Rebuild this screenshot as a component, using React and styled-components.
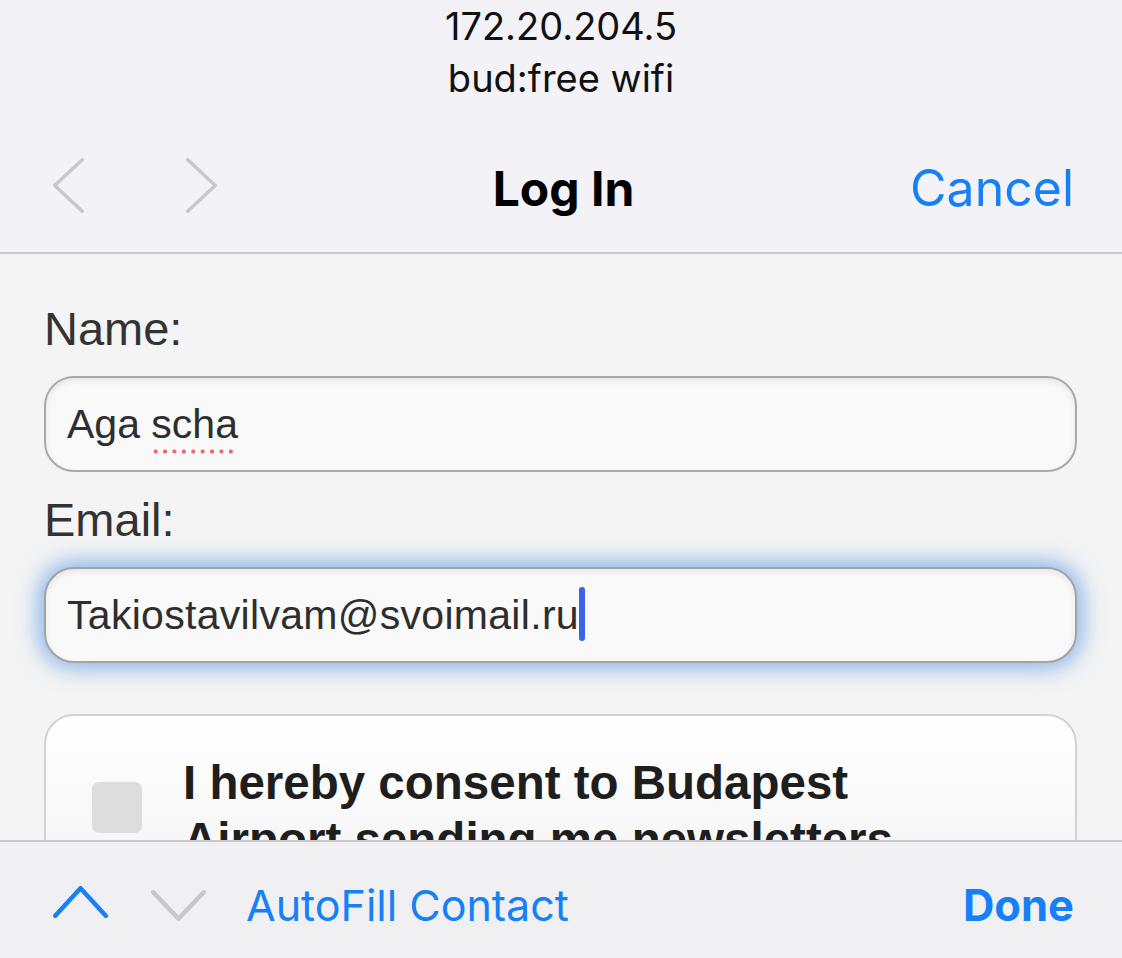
import React from "react";
import styled, { createGlobalStyle } from "styled-components";

const Global = createGlobalStyle`
  html, body { margin: 0; padding: 0; }
  body { background: #f4f4f4; }
  * { box-sizing: border-box; }
`;

const BLUE = "#1580f8";
const SF = `Inter, "Noto Sans", "Liberation Sans", sans-serif`;
const WEB = `"Liberation Sans", Arial, sans-serif`;

const Screen = styled.div`
  width: 1122px;
  height: 958px;
  display: flex;
  flex-direction: column;
  overflow: hidden;
  background: #f4f4f4;
`;

const Header = styled.header`
  flex: none;
  height: 254px;
  background: #f2f2f7;
  border-bottom: 2px solid #c9c9cd;
  display: flex;
  flex-direction: column;
`;

const InfoLine = styled.div`
  height: 52px;
  line-height: 52px;
  text-align: center;
  font-family: ${SF};
  font-size: 38px;
  color: #111;
`;

const NavBar = styled.div`
  flex: 1;
  display: grid;
  grid-template-columns: 1fr auto 1fr;
  align-items: center;
  padding: 20px 48px 0 53px;
`;

const NavArrows = styled.div`
  display: flex;
  align-items: center;
  gap: 102px;
  margin-top: -6px;
`;

const Title = styled.div`
  font-family: ${SF};
  font-weight: 700;
  font-size: 48px;
  color: #000;
`;

const TextButton = styled.div`
  justify-self: end;
  font-family: ${SF};
  font-size: ${(p) => p.$size || 46}px;
  font-weight: ${(p) => (p.$bold ? 700 : 400)};
  color: ${BLUE};
`;

const Content = styled.main`
  flex: 1;
  min-height: 0;
  overflow: hidden;
  padding: 47px 45px 0 44px;
  display: flex;
  flex-direction: column;
  & > * { flex: none; }
`;

const Label = styled.div`
  font-family: ${WEB};
  font-size: 47px;
  line-height: 56px;
  color: #333;
  margin-bottom: 19px;
`;

const Field = styled.div`
  height: 96px;
  border: 2px solid ${(p) => (p.$focused ? "#a3a3a3" : "#a9a9a9")};
  border-radius: 30px;
  background: #f9f9f9;
  display: flex;
  align-items: center;
  padding-left: 21px;
  font-family: ${WEB};
  font-size: 41px;
  color: #2e2e2e;
  margin-bottom: ${(p) => p.$gap || 20}px;
  box-shadow: inset 0 3px 6px rgba(0, 0, 0, 0.08)
    ${(p) => (p.$focused ? ", 0 0 22px 5px rgba(60, 135, 225, 0.6)" : "")};
`;

const Value = styled.span`
  white-space: nowrap;
  line-height: 56px;
  letter-spacing: ${(p) => p.$spacing || 0}px;
`;

const Misspelled = styled.span`
  padding-bottom: 7px;
  background-image: radial-gradient(circle, #e86a6a 1.8px, transparent 2.3px);
  background-size: 9.4px 5px;
  background-repeat: repeat-x;
  background-position: 0 100%;
`;

const Caret = styled.span`
  display: inline-block;
  vertical-align: -12px;
  width: 6px;
  height: 54px;
  border-radius: 3px;
  background: #3c63e8;
  margin-left: 0;
`;

const Card = styled.div`
  border: 2px solid #d2d2d2;
  border-radius: 30px;
  background: linear-gradient(#ffffff, #f7f7f7 120px);
  padding: 38px 150px 0 46px;
  display: flex;
  align-items: flex-start;
  gap: 41px;
  height: 220px;
`;

const CheckBox = styled.div`
  flex: none;
  width: 50px;
  height: 51px;
  margin-top: 28px;
  border-radius: 7px;
  background: #dddddd;
`;

const ConsentText = styled.div`
  font-family: ${WEB};
  font-weight: 700;
  font-size: 47.5px;
  line-height: 57px;
  color: #1e1e1e;
`;

const Toolbar = styled.footer`
  flex: none;
  height: 118px;
  background: #f0f0f2;
  border-top: 2px solid #c9c9cd;
  display: flex;
  align-items: center;
  padding: 10px 48px 0 53px;
`;

const ToolArrows = styled.div`
  display: flex;
  align-items: center;
  gap: 43px;
  margin-right: 40px;
`;

const Spacer = styled.div`
  flex: 1;
`;

const Chevron = ({ dir, color, w, h, sw, dy = 0 }) => {
  const a = sw / 2;
  const pts = {
    left: `${w - a},${a} ${a},${h / 2} ${w - a},${h - a}`,
    right: `${a},${a} ${w - a},${h / 2} ${a},${h - a}`,
    up: `${a},${h - a} ${w / 2},${a} ${w - a},${h - a}`,
    down: `${a},${a} ${w / 2},${h - a} ${w - a},${a}`,
  }[dir];
  return (
    <svg
      width={w}
      height={h}
      viewBox={`0 0 ${w} ${h}`}
      style={{ display: "block", transform: `translateY(${dy}px)` }}
    >
      <polyline
        points={pts}
        fill="none"
        stroke={color}
        strokeWidth={sw}
        strokeLinecap="round"
        strokeLinejoin="round"
      />
    </svg>
  );
};

export default function App() {
  return (
    <>
      <Global />
      <Screen>
        <Header>
          <InfoLine>172.20.204.5</InfoLine>
          <InfoLine>bud:free wifi</InfoLine>
          <NavBar>
            <NavArrows>
              <Chevron dir="left" color="#c7c7cc" w={31} h={55} sw={3.5} />
              <Chevron dir="right" color="#c7c7cc" w={31} h={55} sw={3.5} />
            </NavArrows>
            <Title>Log In</Title>
            <TextButton $size={50}>Cancel</TextButton>
          </NavBar>
        </Header>
        <Content>
          <Label>Name:</Label>
          <Field>
            <Value>
              Aga <Misspelled>scha</Misspelled>
            </Value>
          </Field>
          <Label>Email:</Label>
          <Field $focused $gap={51}>
            <Value $spacing={0.3}>
              Takiostavilvam@svoimail.ru
              <Caret />
            </Value>
          </Field>
          <Card>
            <CheckBox />
            <ConsentText>
              I hereby consent to Budapest Airport sending me newsletters
            </ConsentText>
          </Card>
        </Content>
        <Toolbar>
          <ToolArrows>
            <Chevron dir="up" color={BLUE} w={55} h={32} sw={4.5} dy={-3} />
            <Chevron dir="down" color="#c7c7cc" w={55} h={31} sw={4.5} dy={0} />
          </ToolArrows>
          <TextButton $size={43}>AutoFill Contact</TextButton>
          <Spacer />
          <TextButton $size={43.5} $bold>
            Done
          </TextButton>
        </Toolbar>
      </Screen>
    </>
  );
}
